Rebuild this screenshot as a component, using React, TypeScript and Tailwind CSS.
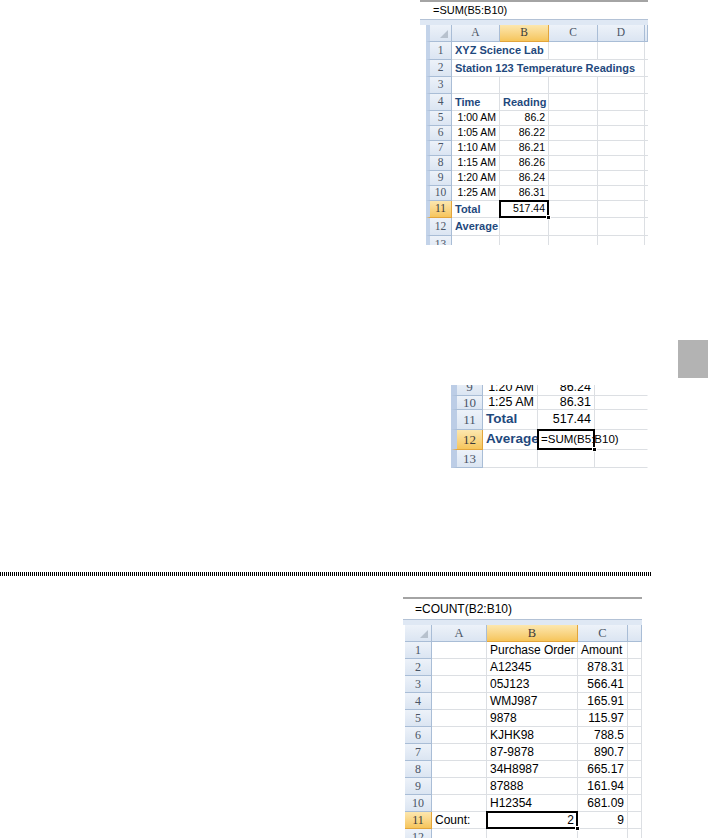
import React from "react";

type P = { children?: React.ReactNode; className?: string };

function Hd({ children, className = "", sel = false }: P & { sel?: boolean }) {
  return (
    <div
      className={`relative flex items-center justify-center border-r border-b font-['Liberation_Serif',serif] ${
        sel
          ? "bg-linear-to-b from-[#fce7ae] to-[#f6c55a] border-r-[#e2a53c] border-b-[#e2a53c] text-[#3a3a3a]"
          : "bg-linear-to-b from-[#edf2f9] to-[#dbe5f2] border-r-[#a9bdd6] border-b-[#a9bdd6] text-[#4a5566]"
      } ${className}`}
    >
      {children}
    </div>
  );
}

function Cl({ children, className = "" }: P) {
  return (
    <div className={`relative flex items-center whitespace-nowrap border-r border-b border-[#dcdfe3] px-[3px] ${className}`}>
      {children}
    </div>
  );
}

function Sel() {
  return (
    <>
      <div className="pointer-events-none absolute -inset-px z-10 border-2 border-black" />
      <div className="absolute -right-[3px] -bottom-[3px] z-20 h-[5px] w-[5px] border border-white bg-black" />
    </>
  );
}

function Corner({ className = "" }: P) {
  return (
    <Hd className={className}>
      <svg className="absolute right-[3px] bottom-[3px]" width="8" height="8" viewBox="0 0 8 8">
        <polygon points="8,0 8,8 0,8" fill="#b7c1cd" />
      </svg>
    </Hd>
  );
}

function FormulaBar({ text, className = "" }: { text: string; className?: string }) {
  return (
    <>
      <div className={`flex items-center border-t-2 border-[#a4a4a4] bg-white font-['Liberation_Sans',Arial,sans-serif] text-black ${className}`}>
        {text}
      </div>
      <div className="h-[6px] border-t border-[#b3c2d6] bg-[#dfe8f4]" />
    </>
  );
}

const times = [
  ["5", "1:00 AM", "86.2"],
  ["6", "1:05 AM", "86.22"],
  ["7", "1:10 AM", "86.21"],
  ["8", "1:15 AM", "86.26"],
  ["9", "1:20 AM", "86.24"],
  ["10", "1:25 AM", "86.31"],
];

const orders = [
  ["2", "A12345", "878.31"],
  ["3", "05J123", "566.41"],
  ["4", "WMJ987", "165.91"],
  ["5", "9878", "115.97"],
  ["6", "KJHK98", "788.5"],
  ["7", "87-9878", "890.7"],
  ["8", "34H8987", "665.17"],
  ["9", "87888", "161.94"],
  ["10", "H12354", "681.09"],
];

function Sheet1() {
  const rh = "border-l-4 border-l-[#c3d3e9] text-[11.5px]";
  const b = "font-bold text-[11px] text-[#1f497d]";
  return (
    <div className="ml-[420px] w-[228px]">
      <FormulaBar text="=SUM(B5:B10)" className="h-[19px] pl-[13px] text-[11px]" />
      <div className="ml-[6px] h-[220px] overflow-hidden font-['Liberation_Sans',Arial,sans-serif] text-[10.5px] text-black">
        <div className="grid grid-cols-[26px_48px_49px_49px_47px_3px] grid-rows-[17px_18px_17px_17px_17px_15px_15px_15px_15px_15px_15px_17px_18px_18px]">
          <Corner className="border-l-4 border-l-[#c3d3e9]" />
          <Hd className="text-[11.5px]">A</Hd>
          <Hd sel className="text-[11.5px]">B</Hd>
          <Hd className="text-[11.5px]">C</Hd>
          <Hd className="text-[11.5px]">D</Hd>
          <Hd />

          <Hd className={rh}>1</Hd>
          <Cl className={`col-span-2 ${b}`}>XYZ Science Lab</Cl>
          <Cl />
          <Cl />
          <Cl />

          <Hd className={rh}>2</Hd>
          <Cl className={`col-span-4 ${b}`}>Station 123 Temperature Readings</Cl>
          <Cl />

          <Hd className={rh}>3</Hd>
          <Cl />
          <Cl />
          <Cl />
          <Cl />
          <Cl />

          <Hd className={rh}>4</Hd>
          <Cl className={b}>Time</Cl>
          <Cl className={b}>Reading</Cl>
          <Cl />
          <Cl />
          <Cl />

          {times.map(([n, t, v]) => (
            <React.Fragment key={n}>
              <Hd className={rh}>{n}</Hd>
              <Cl className="justify-end">{t}</Cl>
              <Cl className="justify-end">{v}</Cl>
              <Cl />
              <Cl />
              <Cl />
            </React.Fragment>
          ))}

          <Hd sel className={rh}>11</Hd>
          <Cl className={b}>Total</Cl>
          <Cl className="justify-end">
            517.44
            <Sel />
          </Cl>
          <Cl />
          <Cl />
          <Cl />

          <Hd className={rh}>12</Hd>
          <Cl className={b}>Average</Cl>
          <Cl />
          <Cl />
          <Cl />
          <Cl />

          <Hd className={rh}>13</Hd>
          <Cl />
          <Cl />
          <Cl />
          <Cl />
          <Cl />
        </div>
      </div>
    </div>
  );
}

function Sheet2() {
  const rh = "border-l-[6px] border-l-[#bccde6] text-[13px]";
  const b = "font-bold text-[13.5px] text-[#1f497d]";
  return (
    <div className="ml-[451px] h-[83px] w-[197px] overflow-hidden font-['Liberation_Sans',Arial,sans-serif] text-[12.5px] text-black">
      <div className="-mt-[6px] grid grid-cols-[32px_55px_57px_53px] grid-rows-[17px_14px_20px_20px_18px]">
        <Hd className={rh}>9</Hd>
        <Cl className="justify-end">1:20 AM</Cl>
        <Cl className="justify-end">86.24</Cl>
        <Cl className="border-r-transparent" />

        <Hd className={rh}>10</Hd>
        <Cl className="justify-end">1:25 AM</Cl>
        <Cl className="justify-end">86.31</Cl>
        <Cl className="border-r-transparent" />

        <Hd className={rh}>11</Hd>
        <Cl className={b}>Total</Cl>
        <Cl className="justify-end">517.44</Cl>
        <Cl className="border-r-transparent" />

        <Hd sel className={rh}>12</Hd>
        <Cl className={b}>Average</Cl>
        <Cl className="overflow-visible text-[11.5px]">
          <span>=SUM(B5:B10)</span>
          <span className="ml-[2px] inline-block h-[16px] w-px bg-black" />
          <Sel />
        </Cl>
        <Cl className="border-r-transparent" />

        <Hd className={rh}>13</Hd>
        <Cl />
        <Cl />
        <Cl className="border-r-transparent" />
      </div>
    </div>
  );
}

function Sheet3() {
  const rh = "text-[12px]";
  return (
    <div className="ml-[403px] w-[239px]">
      <FormulaBar text="=COUNT(B2:B10)" className="h-[22px] pl-[12px] text-[12px]" />
      <div className="ml-[2px] h-[213px] overflow-hidden font-['Liberation_Sans',Arial,sans-serif] text-[12px] text-black">
        <div className="grid grid-cols-[27px_55px_91px_50px_14px] grid-rows-[17px_17px_17px_17px_17px_17px_17px_17px_17px_17px_17px_17px_17px]">
          <Corner />
          <Hd className="text-[12.5px]">A</Hd>
          <Hd sel className="text-[12.5px]">B</Hd>
          <Hd className="text-[12.5px]">C</Hd>
          <Hd />

          <Hd className={rh}>1</Hd>
          <Cl />
          <Cl>Purchase Order</Cl>
          <Cl className="px-[2px]">Amount</Cl>
          <Cl />

          {orders.map(([n, p, a]) => (
            <React.Fragment key={n}>
              <Hd className={rh}>{n}</Hd>
              <Cl />
              <Cl>{p}</Cl>
              <Cl className="justify-end">{a}</Cl>
              <Cl />
            </React.Fragment>
          ))}

          <Hd sel className={rh}>11</Hd>
          <Cl>Count:</Cl>
          <Cl className="justify-end">
            2
            <Sel />
          </Cl>
          <Cl className="justify-end">9</Cl>
          <Cl />

          <Hd className={rh}>12</Hd>
          <Cl />
          <Cl />
          <Cl />
          <Cl />
        </div>
      </div>
    </div>
  );
}

export default function App() {
  return (
    <div className="h-[838px] w-[708px] overflow-hidden bg-white">
      <Sheet1 />
      <div className="mt-[95px] flex justify-end">
        <div className="h-[38px] w-[30px] bg-[#b3b3b3]" />
      </div>
      <div className="mt-[7px]">
        <Sheet2 />
      </div>
      <div className="mt-[104px] h-[4px] w-[652px] bg-[repeating-linear-gradient(90deg,#000_0px,#000_1px,#fff_1px,#fff_2px)]" />
      <div className="mt-[21px]">
        <Sheet3 />
      </div>
    </div>
  );
}
